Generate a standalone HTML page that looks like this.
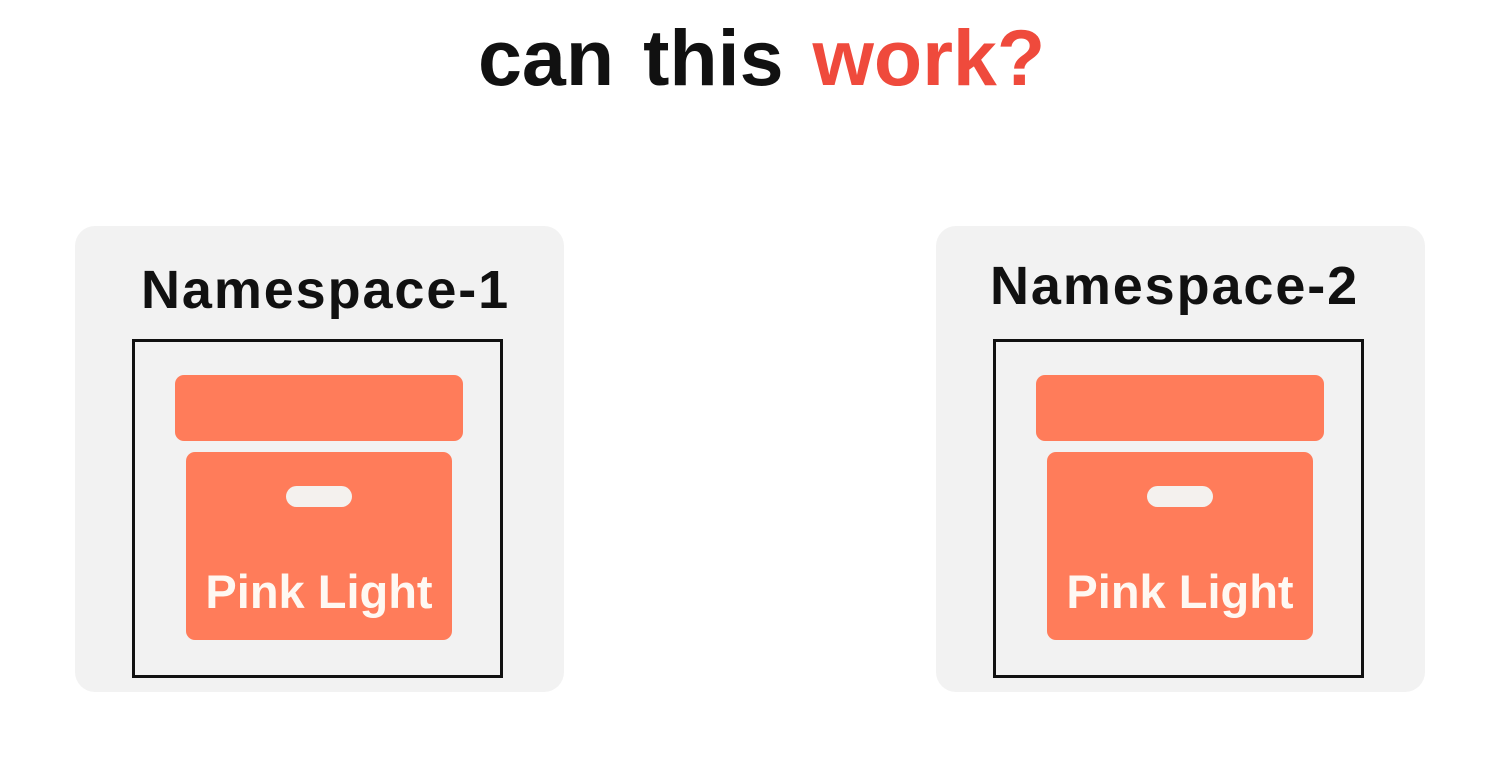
<!DOCTYPE html>
<html><head><style>
body{margin:0;width:1507px;height:773px;background:#fff;position:relative;overflow:hidden;font-family:"Liberation Sans",sans-serif;font-weight:bold}
.t{position:absolute;left:478px;top:13px;font-size:79px;line-height:90px;white-space:nowrap;color:#111;word-spacing:7px}
.t span{color:#ef4a3c}
.p{position:absolute;top:226px;width:489px;height:466px;background:#f2f2f2;border-radius:20px}
.n{position:absolute;font-size:54px;line-height:60px;white-space:nowrap;color:#111;letter-spacing:1.9px}
.b{position:absolute;top:339px;width:365px;height:333px;border:3px solid #111}
.lid{position:absolute;top:375px;width:288px;height:66px;background:#ff7c5a;border-radius:9px}
.body{position:absolute;top:452px;width:266px;height:188px;background:#ff7c5a;border-radius:9px}
.h{position:absolute;left:100px;top:34px;width:66px;height:21px;border-radius:11px;background:#f4f1ee}
.pl{position:absolute;left:0;width:266px;top:112px;text-align:center;color:#fff8f2;font-size:47px;line-height:56px;white-space:nowrap}
</style></head><body>
<div class="t">can this <span>work?</span></div>

<div class="p" style="left:75px"></div>
<div class="n" style="left:141px;top:260px">Namespace-1</div>
<div class="b" style="left:132px"></div>
<div class="lid" style="left:175px"></div>
<div class="body" style="left:186px"><div class="h"></div><div class="pl">Pink Light</div></div>

<div class="p" style="left:936px"></div>
<div class="n" style="left:990px;top:256px">Namespace-2</div>
<div class="b" style="left:993px"></div>
<div class="lid" style="left:1036px"></div>
<div class="body" style="left:1047px"><div class="h"></div><div class="pl">Pink Light</div></div>
</body></html>
